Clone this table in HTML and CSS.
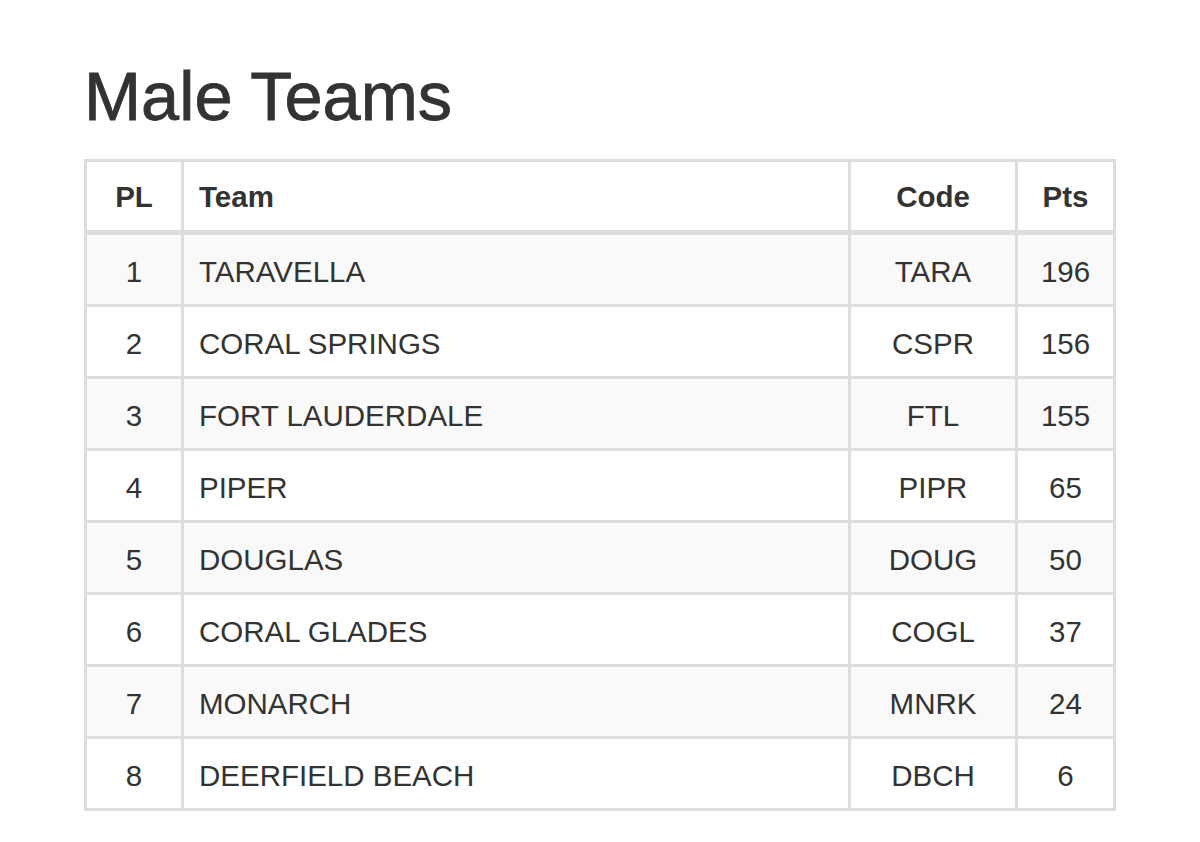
FILE: index.html
```html
<!DOCTYPE html>
<html>
<head>
<meta charset="utf-8">
<link rel="stylesheet" href="styles.css">
</head>
<body>
<h1 class="title">Male Teams</h1>
<table class="standings">
  <thead>
    <tr>
      <th class="c-pl">PL</th>
      <th class="c-team">Team</th>
      <th class="c-code">Code</th>
      <th class="c-pts">Pts</th>
    </tr>
  </thead>
  <tbody>
    <tr><td class="c-pl">1</td><td class="c-team">TARAVELLA</td><td class="c-code">TARA</td><td class="c-pts">196</td></tr>
    <tr><td class="c-pl">2</td><td class="c-team">CORAL SPRINGS</td><td class="c-code">CSPR</td><td class="c-pts">156</td></tr>
    <tr><td class="c-pl">3</td><td class="c-team">FORT LAUDERDALE</td><td class="c-code">FTL</td><td class="c-pts">155</td></tr>
    <tr><td class="c-pl">4</td><td class="c-team">PIPER</td><td class="c-code">PIPR</td><td class="c-pts">65</td></tr>
    <tr><td class="c-pl">5</td><td class="c-team">DOUGLAS</td><td class="c-code">DOUG</td><td class="c-pts">50</td></tr>
    <tr><td class="c-pl">6</td><td class="c-team">CORAL GLADES</td><td class="c-code">COGL</td><td class="c-pts">37</td></tr>
    <tr><td class="c-pl">7</td><td class="c-team">MONARCH</td><td class="c-code">MNRK</td><td class="c-pts">24</td></tr>
    <tr><td class="c-pl">8</td><td class="c-team">DEERFIELD BEACH</td><td class="c-code">DBCH</td><td class="c-pts">6</td></tr>
  </tbody>
</table>
</body>
</html>
```
FILE: styles.css
```css
html, body {
  margin: 0;
  padding: 0;
  background: #ffffff;
}

body {
  padding: 61px 0 0 84px;
  font-family: "Liberation Sans", Arial, Helvetica, sans-serif;
  color: #333333;
}

.title {
  margin: 0 0 26px 0;
  font-size: 68.5px;
  line-height: 72px;
  font-weight: 400;
  color: #333333;
  -webkit-text-stroke: 0.8px #333333;
}

.standings {
  border-collapse: separate;
  border-spacing: 0;
  table-layout: fixed;
  width: 1032px;
  border-top: 3px solid #dddddd;
  border-left: 3px solid #dddddd;
  font-size: 29.5px;
}

.standings th,
.standings td {
  box-sizing: border-box;
  border-right: 3px solid #dddddd;
  border-bottom: 3px solid #dddddd;
  padding: 4px 15px 0 15px;
  height: 72px;
  line-height: 37px;
  vertical-align: middle;
  text-align: center;
  white-space: nowrap;
}

.standings th {
  font-weight: 700;
  height: 73px;
  padding-top: 0;
  border-bottom-width: 5px;
}

.standings tbody tr:nth-child(odd) td {
  background: #f9f9f9;
}

.standings .c-pl { width: 97px; }
.standings .c-team { width: 667px; text-align: left; }
.standings .c-code { width: 167px; }
.standings .c-pts { width: 98px; }
```
